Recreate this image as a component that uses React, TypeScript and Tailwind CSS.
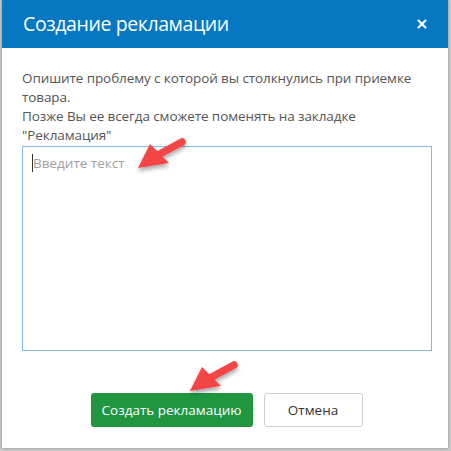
import { X } from 'lucide-react';

function Arrow({ className }: { className: string }) {
  return (
    <svg className={className} width="64" height="44" viewBox="0 0 64 44" fill="none">
      <defs>
        <filter id="ashadow" x="-30%" y="-30%" width="160%" height="170%">
          <feDropShadow dx="0" dy="3" stdDeviation="2" floodColor="#000" floodOpacity="0.35" />
        </filter>
      </defs>
      <g filter="url(#ashadow)">
        <path d="M46 6 L22 19" stroke="#f34545" strokeWidth="7.5" strokeLinecap="round" />
        <path d="M2 32 L14 8 L33 27 Z" fill="#f34545" />
      </g>
    </svg>
  );
}

export default function App() {
  return (
    <div className="w-[451px] h-[451px] bg-[#c9c9c9] overflow-hidden font-['Open_Sans',sans-serif]">
      <div className="relative ml-[2px] w-[446px] h-[448px] bg-white flex flex-col shadow-[0_0_3px_rgba(0,0,0,0.3)]">
        {/* header */}
        <div className="h-[48px] bg-[#0578c1] flex items-center justify-between pl-[21px] pr-[19px]">
          <h1 className="text-[19.5px] text-white leading-none tracking-[-0.4px]">Создание рекламации</h1>
          <X className="w-[14px] h-[14px] text-white" strokeWidth={3.5} />
        </div>

        {/* body */}
        <div className="flex-1 pl-[20px] pr-[16px] pt-[21px] flex flex-col">
          <p className="text-[13.5px] leading-[19px] text-[#555] tracking-[-0.1px]">
            Опишите проблему с которой вы столкнулись при приемке товара.
            <br />
            Позже Вы ее всегда сможете поменять на закладке "Рекламация"
          </p>
          <div className="mt-[1px] h-[205px] border border-[#84b7e6] px-[9px] pt-[6px] flex items-start">
            <span className="w-px h-[18px] bg-[#333] mt-[1px]" />
            <span className="text-[13.5px] text-[#a0a0a0] leading-[20px]">Введите текст</span>
          </div>

          <div className="mt-[42px] flex justify-center gap-[11px] pr-[1px]">
            <button className="w-[162px] h-[34px] bg-[#209641] rounded-[3px] text-white text-[13.5px]">
              Создать рекламацию
            </button>
            <button className="w-[99px] h-[34px] bg-white border border-[#cfcfcf] rounded-[3px] text-[#333] text-[13.5px]">
              Отмена
            </button>
          </div>
        </div>

        <Arrow className="absolute left-[134px] top-[136px]" />
        <Arrow className="absolute left-[186px] top-[359px]" />
      </div>
    </div>
  );
}
